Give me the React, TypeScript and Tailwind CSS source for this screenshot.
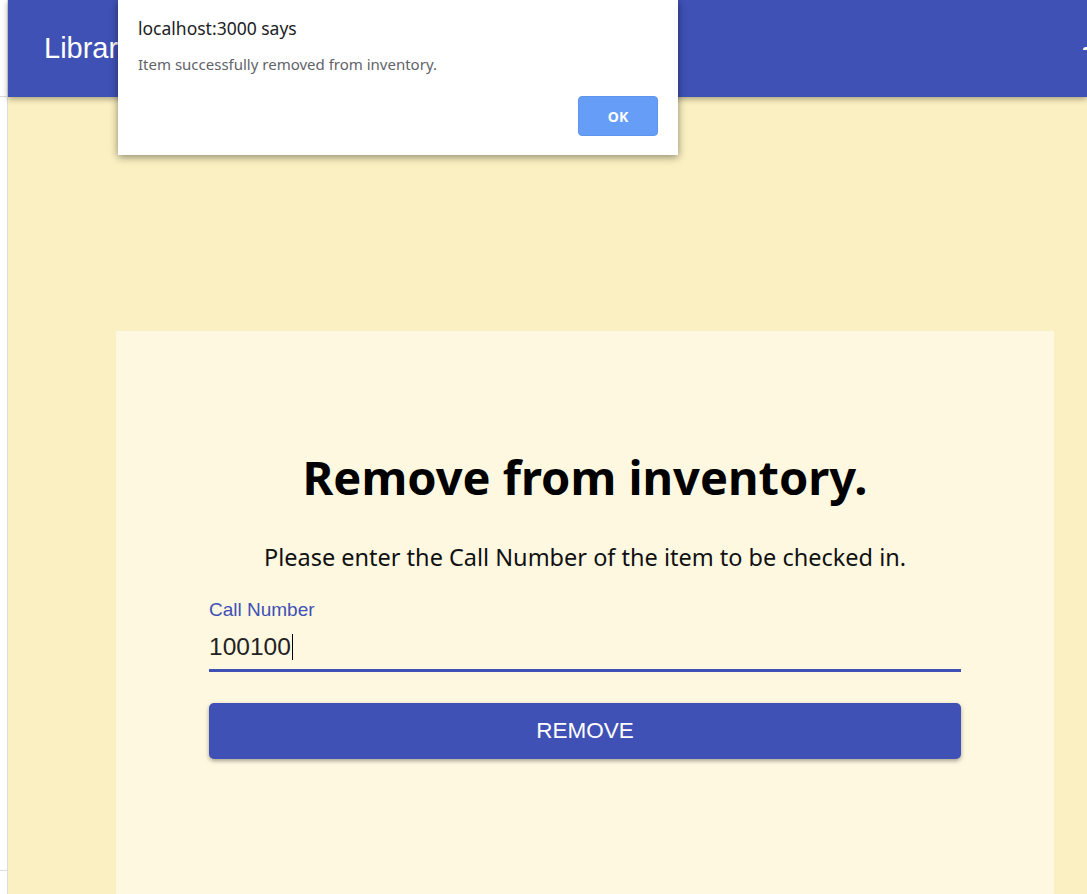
export default function App() {
  return (
    <div className="relative flex h-[894px] w-[1087px] overflow-hidden bg-white" style={{ fontFamily: "'Noto Sans', 'Open Sans', sans-serif" }}>
      {/* left gutter of the window */}
      <div className="flex w-[8px] flex-col border-r border-[#dcdcdc] bg-white">
        <div className="h-[97px] border-b border-[#dcdcdc]" />
        <div className="flex-1" />
        <div className="h-[24px] border-t border-[#dcdcdc]" />
      </div>

      <div className="flex flex-1 flex-col bg-[#fbf0c1]">
        <header className="relative z-10 flex h-[97px] items-center bg-[#3f51b5] px-[36px] shadow-[0_2px_6px_rgba(0,0,0,0.35)]">
          <h1 className="font-['Liberation_Sans',Arial,sans-serif] text-[29px] text-white">Library</h1>
          <div className="ml-auto mr-[-36px] h-[3px] w-[4px] self-center rounded-tl-sm bg-white" />
        </header>

        <main className="flex-1 pt-[234px]">
          <section className="ml-[108px] h-full w-[938px] bg-[#fef8e1] px-[93px] pt-[116px]">
            <h2 className="text-center text-[47px] font-bold leading-[60px] text-black">Remove from inventory.</h2>
            <p className="mt-[34px] text-center text-[23.5px] leading-[32px] text-[#111]">
              Please enter the Call Number of the item to be checked in.
            </p>
            <div className="mt-[26px] font-['Liberation_Sans',Arial,sans-serif]">
              <label className="block text-[19px] leading-[22px] text-[#3f51b5]">Call Number</label>
              <div className="mt-[11px] flex h-[40px] items-start border-b-[3px] border-[#3f51b5] text-[24.5px] leading-[30px] text-[#222]">
                100100<span className="ml-[1px] mt-[2px] h-[26px] w-px bg-black" />
              </div>
              <button className="mt-[31px] flex h-[56px] w-full items-center justify-center rounded-[5px] bg-[#3f51b5] text-[22.5px] text-white shadow-[0_2px_4px_rgba(0,0,0,0.35)]">
                REMOVE
              </button>
            </div>
          </section>
        </main>
      </div>

      {/* browser alert dialog */}
      <div className="absolute left-[118px] top-0 z-20 h-[155px] w-[560px] bg-white px-[20px] shadow-[0_2px_8px_rgba(0,0,0,0.45)]">
        <div className="pt-[16px] text-[17.5px] leading-[24px] text-[#202124]">localhost:3000 says</div>
        <div className="mt-[14px] text-[15px] leading-[20px] text-[#5f6368]">Item successfully removed from inventory.</div>
        <div className="mt-[22px] flex justify-end">
          <button className="h-[40px] w-[80px] rounded-[4px] border border-[#5d95f0] bg-[#669df6] text-[14px] font-bold text-white">OK</button>
        </div>
      </div>
    </div>
  );
}
